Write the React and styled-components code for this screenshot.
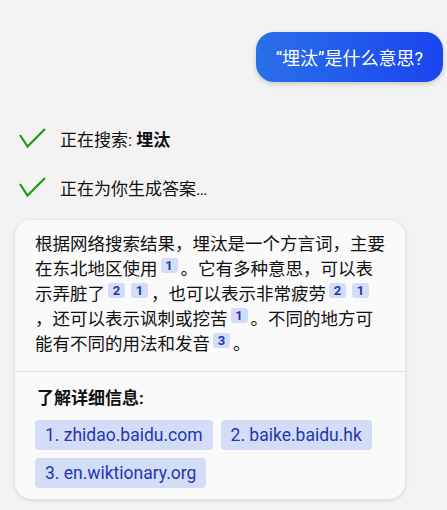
import React from "react";
import styled, { createGlobalStyle } from "styled-components";

const GlobalStyle = createGlobalStyle`
  html, body {
    margin: 0;
    padding: 0;
    background: #f3f3f3;
  }
  body {
    font-family: Roboto, "Noto Sans CJK SC", sans-serif;
    color: #111;
  }
`;

const Page = styled.div`
  width: 447px;
  height: 510px;
  box-sizing: border-box;
  padding: 32px 4px 0 15px;
  display: flex;
  flex-direction: column;
  overflow: hidden;
`;

const UserRow = styled.div`
  display: flex;
  justify-content: flex-end;
`;

const UserBubble = styled.div`
  height: 50px;
  box-sizing: border-box;
  padding: 0 20px;
  display: flex;
  align-items: center;
  border-radius: 18px;
  background: linear-gradient(90deg, #2a6fe9, #1a45ef);
  color: #fff;
  font-size: 18px;
  box-shadow: 0 2px 5px rgba(0, 0, 0, 0.18);
`;

const Steps = styled.div`
  display: flex;
  flex-direction: column;
  gap: 27px;
  margin-top: 45px;
  padding-left: 4px;
`;

const Step = styled.div`
  display: flex;
  align-items: center;
  gap: 14px;
  font-size: 17px;
  height: 22px;
  b {
    font-weight: 700;
  }
`;

const Card = styled.div`
  margin-top: 22px;
  width: 390px;
  background: #fafafa;
  border-radius: 16px;
  box-shadow: 0 1px 4px rgba(0, 0, 0, 0.14);
`;

const Answer = styled.div`
  padding: 12px 20px 14px;
  font-size: 17.5px;
  line-height: 25px;
`;

const Cite = styled.span`
  display: inline-block;
  width: 17px;
  height: 15px;
  line-height: 15px;
  margin: 1px 3px 0;
  border-radius: 3px;
  background: #d3ddf8;
  color: #2637a8;
  font-family: Roboto, sans-serif;
  font-size: 13px;
  font-weight: 700;
  text-align: center;
  vertical-align: top;
`;

const Divider = styled.div`
  height: 1px;
  background: #e0e0e0;
`;

const More = styled.div`
  padding: 15px 20px 11px;
`;

const MoreTitle = styled.div`
  font-size: 17px;
  line-height: 22px;
  font-weight: 700;
  padding-left: 2px;
  margin-bottom: 11px;
`;

const Links = styled.div`
  display: flex;
  flex-wrap: wrap;
  gap: 8px;
`;

const Chip = styled.a`
  height: 30px;
  display: flex;
  align-items: center;
  padding: 0 10px;
  border-radius: 4px;
  background: #d3ddf8;
  color: #2536b0;
  font-size: 17.5px;
  text-decoration: none;
`;

const Check = () => (
  <svg width="27" height="22" viewBox="0 0 27 22">
    <path d="M1 8 L8.5 19.5 L26 2" fill="none" stroke="#1c9b1c" strokeWidth="2.2" />
  </svg>
);

const C = ({ n }) => <Cite>{n}</Cite>;

export default function App() {
  return (
    <>
      <GlobalStyle />
      <Page>
        <UserRow>
          <UserBubble>“埋汰”是什么意思?</UserBubble>
        </UserRow>
        <Steps>
          <Step>
            <Check />
            <span>
              正在搜索: <b>埋汰</b>
            </span>
          </Step>
          <Step>
            <Check />
            <span>正在为你生成答案…</span>
          </Step>
        </Steps>
        <Card>
          <Answer>
            根据网络搜索结果，埋汰是一个方言词，主要在东北地区使用<C n="1" />。它有多种意思，可以表示弄脏了<C n="2" /><C n="1" />，也可以表示非常疲劳<C n="2" /><C n="1" />，还可以表示讽刺或挖苦<C n="1" />。不同的地方可能有不同的用法和发音<C n="3" />。
          </Answer>
          <Divider />
          <More>
            <MoreTitle>了解详细信息:</MoreTitle>
            <Links>
              <Chip>1. zhidao.baidu.com</Chip>
              <Chip>2. baike.baidu.hk</Chip>
              <Chip>3. en.wiktionary.org</Chip>
            </Links>
          </More>
        </Card>
      </Page>
    </>
  );
}
